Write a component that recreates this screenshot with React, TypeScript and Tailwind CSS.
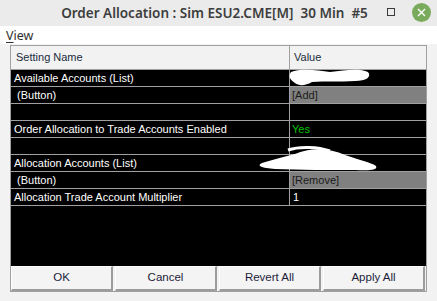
import React from 'react';

type Row = {
  name: string;
  value?: string;
  kind?: 'button' | 'yes' | 'plain';
};

const ROWS: Row[] = [
  { name: 'Available Accounts (List)' },
  { name: ' (Button)', value: '[Add]', kind: 'button' },
  { name: '' },
  { name: 'Order Allocation to Trade Accounts Enabled', value: 'Yes', kind: 'yes' },
  { name: '' },
  { name: 'Allocation Accounts (List)' },
  { name: ' (Button)', value: '[Remove]', kind: 'button' },
  { name: 'Allocation Trade Account Multiplier', value: '1', kind: 'plain' },
];

const BUTTONS = ['OK', 'Cancel', 'Revert All', 'Apply All'];

function TitleBar() {
  return (
    <div className="relative flex h-[26px] items-center justify-center bg-[#ebebeb]">
      <span className="pr-[8px] text-[13.5px] font-semibold text-[#3d3d3d] [font-family:'Noto_Sans',sans-serif]">
        Order Allocation : Sim ESU2.CME[M]&nbsp; 30 Min&nbsp; #5
      </span>
      <div className="absolute left-[387px] top-[8px] h-[8px] w-[8px] border border-[#3a3a3a]" />
      <div className="absolute left-[412px] top-[3px] flex h-[19px] w-[19px] items-center justify-center rounded-full bg-[#7aab5c]">
        <svg width="9" height="9" viewBox="0 0 9 9">
          <path d="M1 1L8 8M8 1L1 8" stroke="#fff" strokeWidth="1.4" />
        </svg>
      </div>
    </div>
  );
}

function Redactions() {
  return (
    <svg className="pointer-events-none absolute left-0 top-0" width="437" height="301">
      <path
        d="M291 72 C300 68 318 70 330 72 C345 70 360 68 368 72 C372 77 366 81 355 81 C340 82 325 81 312 82 C305 86 299 86 295 83 C290 80 288 76 291 72 Z"
        fill="#fff"
      />
      <path
        d="M295 154 C310 147 330 148 345 155 C360 160 372 163 376 166 C378 170 370 171 355 170 C330 170 300 170 275 169 C262 168 256 166 262 163 C272 160 283 157 295 154 Z"
        fill="#fff"
      />
      <path d="M288 150 C300 146 318 147 330 151" stroke="#fff" strokeWidth="3" fill="none" />
    </svg>
  );
}

export default function App() {
  return (
    <div className="relative h-[301px] w-[437px] overflow-hidden bg-[#f2f2f2] [font-family:'Liberation_Sans',Arial,sans-serif]">
      <TitleBar />
      <div className="flex h-[18px] items-center bg-white pl-[6px] pt-[2px] text-[12.5px] text-[#303030] [font-family:'Noto_Sans',sans-serif]">
        <span>
          <span className="underline underline-offset-2">V</span>iew
        </span>
      </div>

      <div className="ml-[10px] mt-[1px] flex h-[247px] w-[417px] flex-col border border-[#a0a0a0] bg-black">
        <div className="flex h-[24px] shrink-0 border-b border-[#a0a0a0] bg-[#f2f2f2] text-[11px] text-[#1a2b3c]">
          <div className="flex w-[279px] items-center border-r border-[#a0a0a0] pl-[5px]">Setting Name</div>
          <div className="flex flex-1 items-center pl-[4px]">Value</div>
        </div>
        {ROWS.map((row, i) => (
          <div key={i} className="flex h-[17px] shrink-0 border-b border-[#a0a0a0] text-[11px] leading-none">
            <div className="flex w-[279px] items-center whitespace-pre border-r border-[#a0a0a0] pl-[3px] text-white">
              {row.name}
            </div>
            <div
              className={
                row.kind === 'button'
                  ? 'flex flex-1 items-center bg-[#808080] pl-[2px] text-[#1a1a1a]'
                  : row.kind === 'yes'
                  ? 'flex flex-1 items-center pl-[2px] text-[#00c000]'
                  : 'flex flex-1 items-center pl-[3px] text-white'
              }
            >
              {row.value}
            </div>
          </div>
        ))}
        <div className="flex-1" />
        <div className="grid h-[25px] shrink-0 grid-cols-[102px_102px_102px_102px] gap-[2px] bg-[#f2f2f2]">
          {BUTTONS.map((b) => (
            <button
              key={b}
              className="flex items-center justify-center border-b-2 border-l border-r-2 border-t border-b-[#9c9c9c] border-l-white border-r-[#9c9c9c] border-t-white bg-[#f4f4f4] text-[11.5px] text-[#1c1c3a]"
            >
              {b}
            </button>
          ))}
        </div>
      </div>
      <Redactions />
    </div>
  );
}
